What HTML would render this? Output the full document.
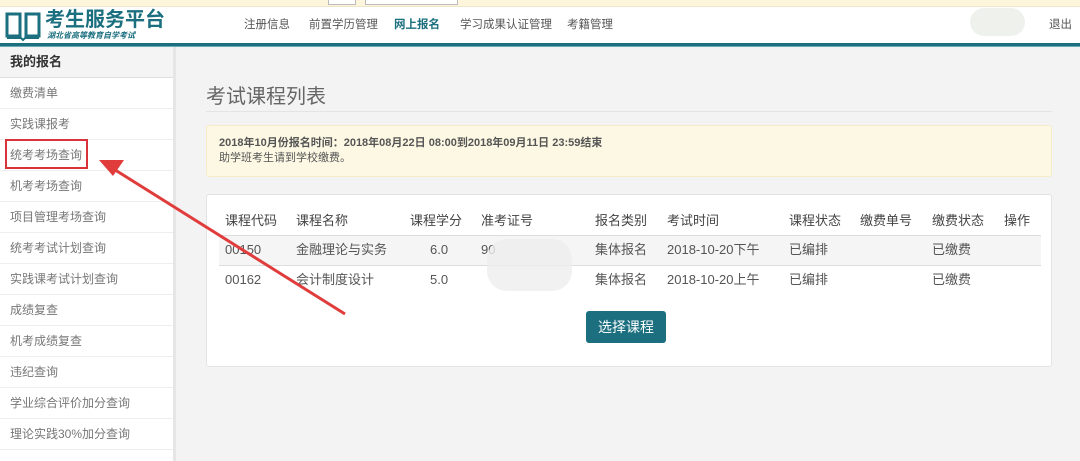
<!DOCTYPE html>
<html><head><meta charset="utf-8"><style>
*{margin:0;padding:0;box-sizing:border-box}
body{width:1080px;height:461px;overflow:hidden;background:#f3f3f4;font-family:"Liberation Sans","Noto Sans CJK SC",sans-serif;position:relative;color:#555}
.topbar{position:absolute;left:0;top:0;width:1080px;height:7px;background:#fdf6dc;border-bottom:1px solid #eee6c8}
.hdr{position:absolute;left:0;top:7px;width:1080px;height:37px;background:#fff}
.line{position:absolute;left:0;top:43px;width:1080px;height:4px;background:#1b6f7f;border-bottom:1px solid #6fa9b3}
.logo{position:absolute;left:45px;top:8px;font-size:20px;line-height:24px;color:#1b6f7f;font-weight:bold;white-space:nowrap}
.logo small{position:absolute;left:2px;top:23px;font-size:8px;line-height:10px;font-style:italic;white-space:nowrap;font-weight:bold}
.nav{position:absolute;top:17px;font-size:11.5px;line-height:16px;color:#555}
.side{position:absolute;left:0;top:47px;width:176px;height:414px;background:#fff;border-right:3px solid #e6e6e6}
.side .h{height:31px;background:#f4f4f4;border-bottom:1px solid #ddd;font-size:13px;line-height:30px;font-weight:bold;color:#333;padding-left:10px}
.side .i{height:31px;border-bottom:1px solid #eee;font-size:12px;line-height:30px;color:#777;padding-left:10px}
.title{position:absolute;left:206px;top:80px;font-size:20px;color:#666}
.tl{position:absolute;left:206px;top:111px;width:846px;height:1px;background:#e4e4e4}
.alert{position:absolute;left:206px;top:125px;width:846px;height:52px;background:#fcf8e3;border:1px solid #f5ecc7;border-radius:3px;padding:10px 12px;font-size:11px;color:#555;line-height:15px}
.panel{position:absolute;left:206px;top:194px;width:846px;height:173px;background:#fff;border:1px solid #e3e3e3;border-radius:3px}
.th,.td{position:absolute;font-size:13px;line-height:18px;white-space:nowrap}
.th{color:#444;top:17px}
.row{position:absolute;left:12px;width:822px;height:30px;border-top:1px solid #ddd}
.btn{position:absolute;left:586px;top:311px;width:80px;height:32px;background:#1b6f7f;color:#fff;font-size:14px;border-radius:3px;text-align:center;line-height:32px}
</style></head><body>
<div class="topbar"></div>
<div style="position:absolute;left:328px;top:0;width:28px;height:5px;border:1px solid #bbb;border-top:none;background:#fff"></div>
<div style="position:absolute;left:365px;top:0;width:93px;height:5px;border:1px solid #bbb;border-top:none;background:#fff"></div>
<div class="hdr"></div>
<svg style="position:absolute;left:5px;top:11px" width="36" height="30" viewBox="0 0 36 30"><path d="M2 3h13v22H2z M21 3h13v22H21z" fill="none" stroke="#1b6f7f" stroke-width="3"/><path d="M2 27h14l2 2 2-2h14" fill="none" stroke="#1b6f7f" stroke-width="2"/></svg>
<div class="logo">考生服务平台<small>湖北省高等教育自学考试</small></div>
<div class="nav" style="left:244px">注册信息</div>
<div class="nav" style="left:309px">前置学历管理</div>
<div class="nav" style="left:394px;font-weight:bold;color:#1b6f7f">网上报名</div>
<div class="nav" style="left:460px">学习成果认证管理</div>
<div class="nav" style="left:567px">考籍管理</div>
<div style="position:absolute;left:970px;top:8px;width:55px;height:28px;border-radius:14px;background:#eef1ec"></div>
<div class="nav" style="left:1049px">退出</div>
<div class="line"></div>
<div class="side">
<div class="h">我的报名</div>
<div class="i">缴费清单</div><div class="i">实践课报考</div><div class="i">统考考场查询</div><div class="i">机考考场查询</div><div class="i">项目管理考场查询</div><div class="i">统考考试计划查询</div><div class="i">实践课考试计划查询</div><div class="i">成绩复查</div><div class="i">机考成绩复查</div><div class="i">违纪查询</div><div class="i">学业综合评价加分查询</div><div class="i">理论实践30%加分查询</div>
</div>
<div class="title">考试课程列表</div>
<div class="tl"></div>
<div class="alert"><b>2018年10月份报名时间：2018年08月22日 08:00到2018年09月11日 23:59结束</b><br>助学班考生请到学校缴费。</div>
<div class="panel">
<div class="th" style="left:18px">课程代码</div><div class="th" style="left:89px">课程名称</div><div class="th" style="left:203px">课程学分</div><div class="th" style="left:274px">准考证号</div><div class="th" style="left:388px">报名类别</div><div class="th" style="left:460px">考试时间</div><div class="th" style="left:582px">课程状态</div><div class="th" style="left:653px">缴费单号</div><div class="th" style="left:725px">缴费状态</div><div class="th" style="left:797px">操作</div>
<div class="row" style="top:40px;background:#f5f5f5"></div>
<div class="row" style="top:70px"></div>
<div class="td" style="left:18px;top:46px">00150</div><div class="td" style="left:89px;top:46px">金融理论与实务</div><div class="td" style="left:223px;top:46px">6.0</div><div class="td" style="left:274px;top:46px">90</div><div class="td" style="left:388px;top:46px">集体报名</div><div class="td" style="left:460px;top:46px">2018-10-20下午</div><div class="td" style="left:582px;top:46px">已编排</div><div class="td" style="left:725px;top:46px">已缴费</div>
<div class="td" style="left:18px;top:76px">00162</div><div class="td" style="left:89px;top:76px">会计制度设计</div><div class="td" style="left:223px;top:76px">5.0</div><div class="td" style="left:388px;top:76px">集体报名</div><div class="td" style="left:460px;top:76px">2018-10-20上午</div><div class="td" style="left:582px;top:76px">已编排</div><div class="td" style="left:725px;top:76px">已缴费</div>
<div style="position:absolute;left:280px;top:44px;width:85px;height:52px;border-radius:20px;background:#eeeeee;opacity:.8"></div>
</div>
<div class="btn">选择课程</div>
<div style="position:absolute;left:5px;top:139px;width:83px;height:30px;border:2px solid #d9333a"></div>
<svg style="position:absolute;left:0;top:0" width="1080" height="461"><path d="M345 314 L112 168" stroke="#e03c3c" stroke-width="3"/><path d="M99 160 L124 160 L113 176 Z" fill="#e03c3c"/></svg>
</body></html>
